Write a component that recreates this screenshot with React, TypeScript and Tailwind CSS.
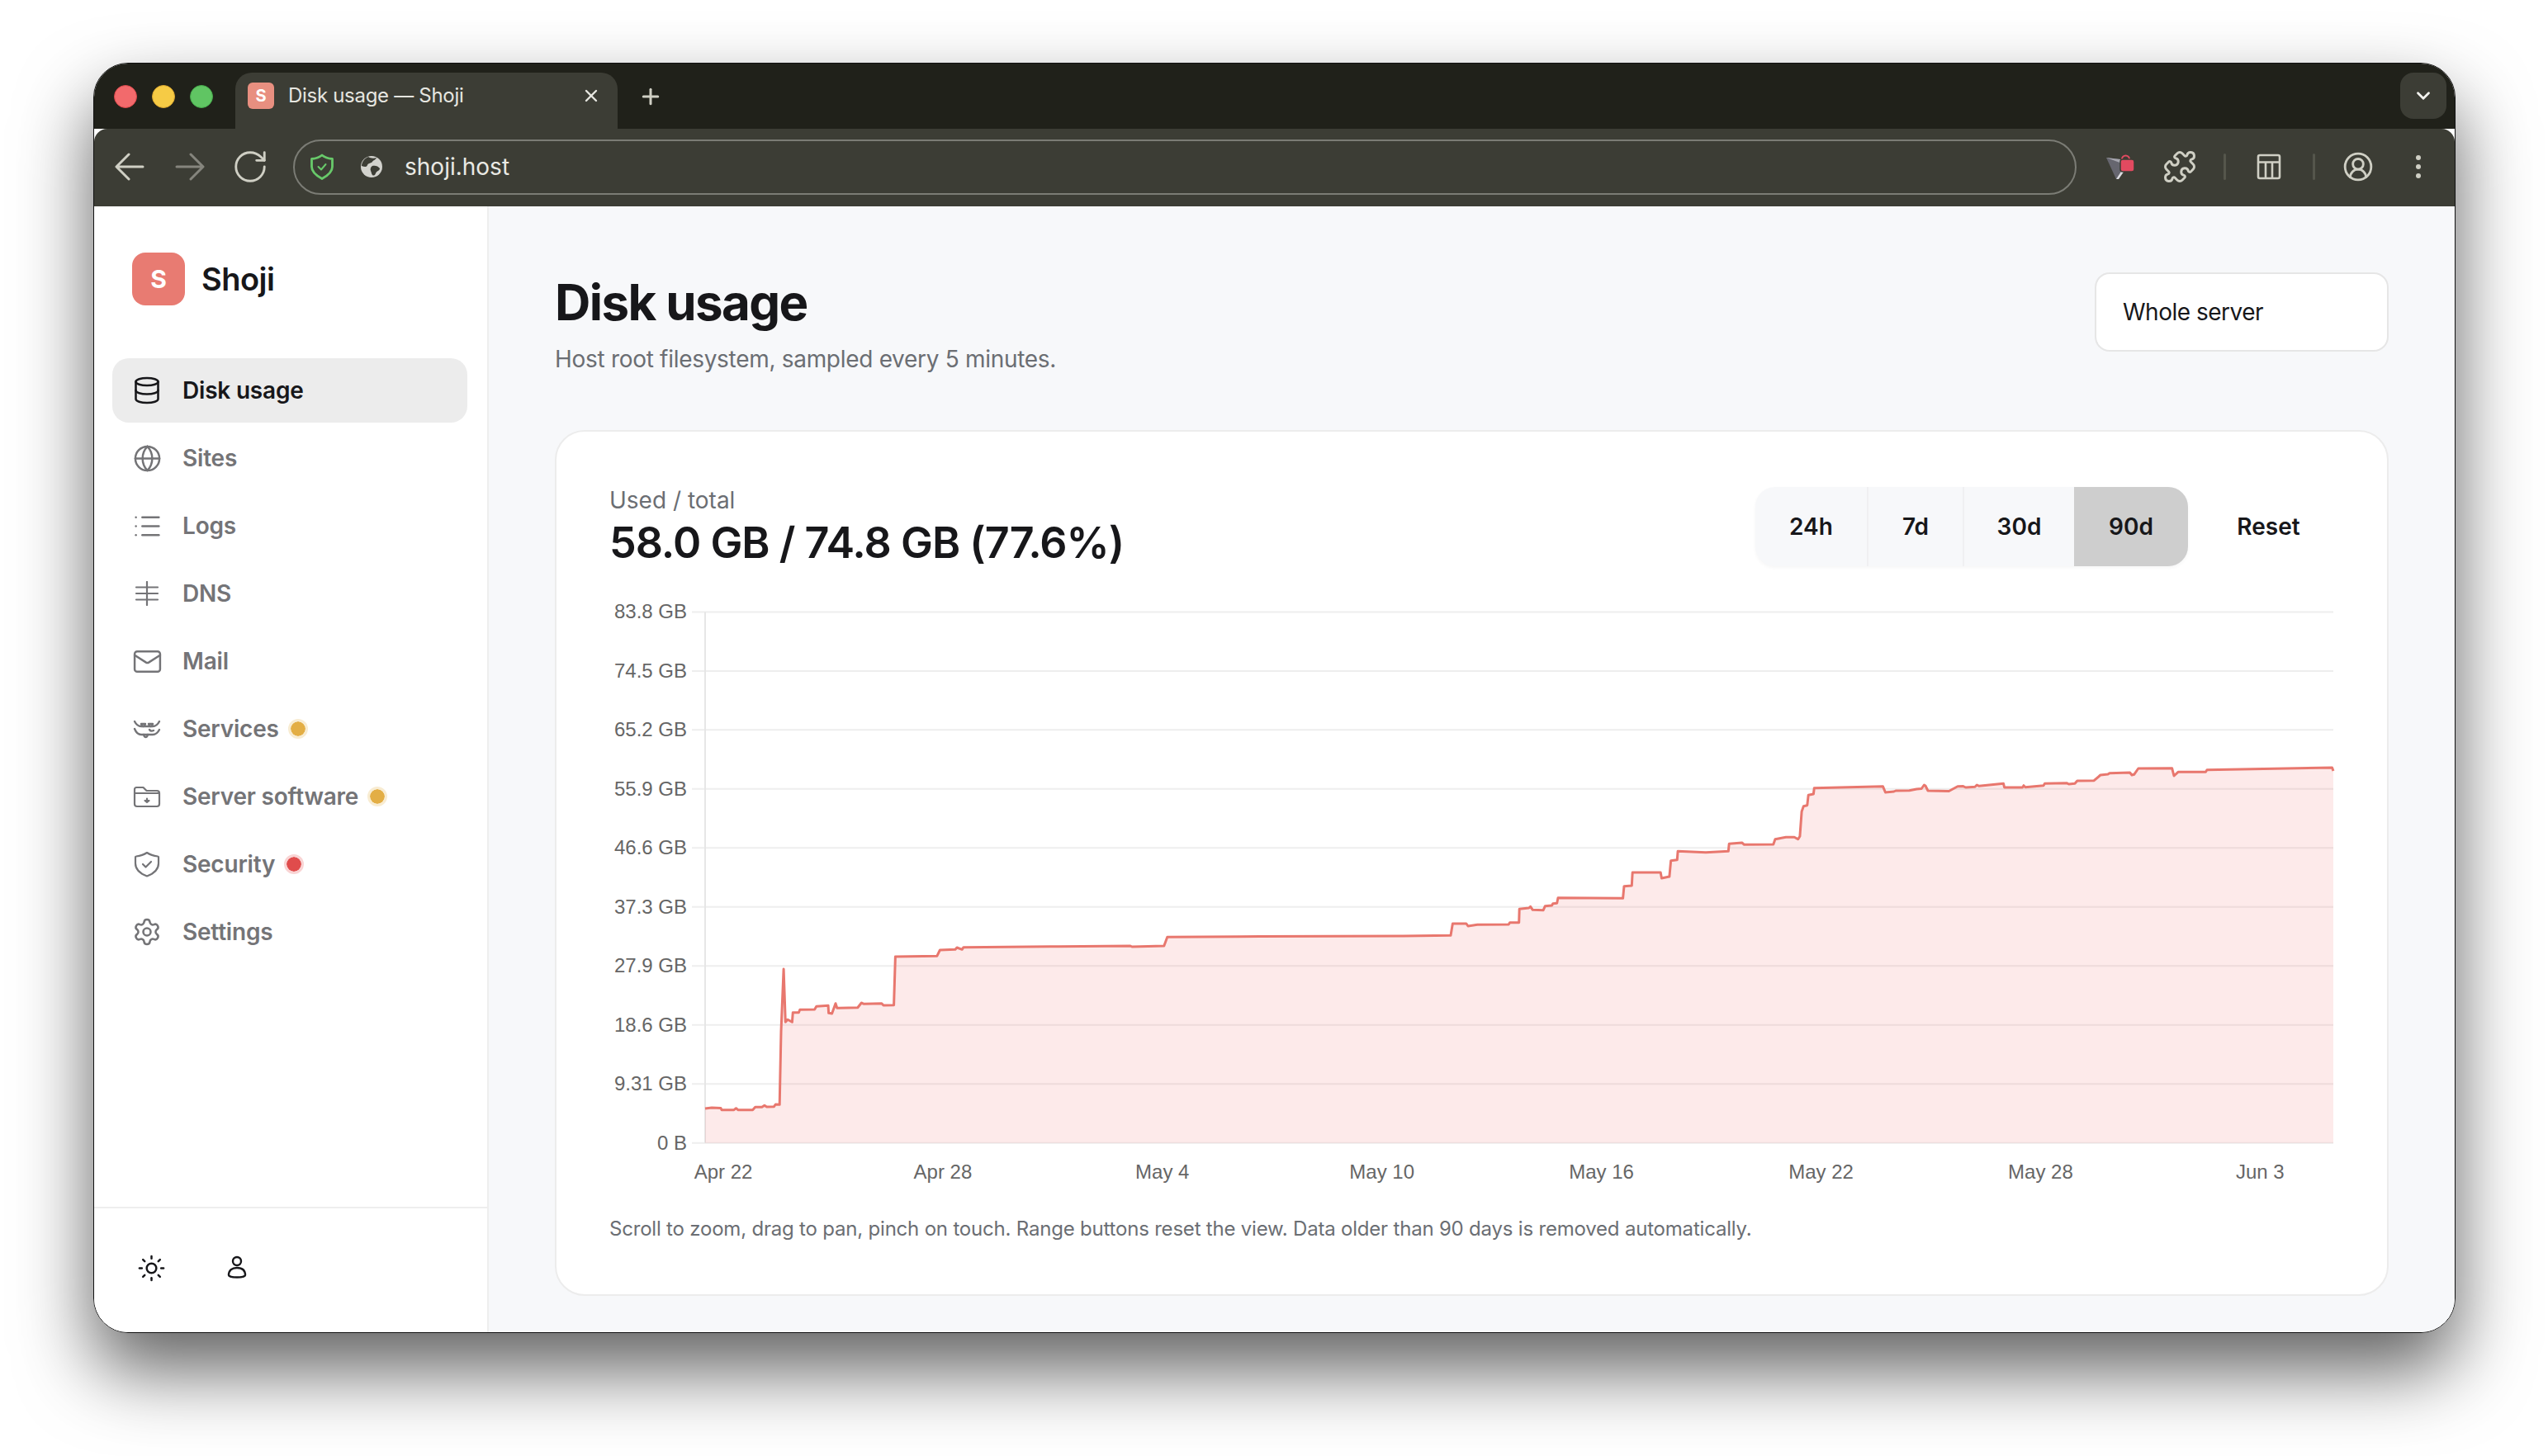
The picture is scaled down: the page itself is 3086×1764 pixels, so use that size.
import type { ReactNode } from "react";
import {
  ChevronDown,
  CircleUserRound,
  Database,
  Globe,
  List,
  Mail,
  Plus,
  Puzzle,
  RotateCw,
  Settings,
  Sun,
  X,
} from "lucide-react";

// page-pixel coordinates of the usage line, read off the screenshot
const LINE: [number, number][] = [
  [854, 1343], [862, 1342], [873, 1342.5], [874, 1344.7], [889, 1344.7], [891.5, 1342.7], [893.8, 1344.7],
  [911.6, 1344.7], [914.7, 1341.3], [922.8, 1341.3], [925.9, 1339.3], [928.6, 1341], [937.5, 1340.7], [939.3, 1338],
  [944.2, 1338.3], [946, 1250], [949.1, 1174], [951.3, 1238.3], [954, 1235.3], [959.4, 1238.3], [960.3, 1226.7],
  [967.4, 1226.7], [968.8, 1223.3], [986.6, 1223], [988.8, 1219.3], [1003.1, 1218.3], [1003.6, 1227.3], [1007.6, 1228],
  [1012, 1215.7], [1013.8, 1221.3], [1038.8, 1220.7], [1043.3, 1215], [1046.4, 1216.3], [1067.9, 1215.7], [1070, 1218],
  [1082.6, 1217.7], [1084.4, 1159], [1134.8, 1158.3], [1138.4, 1151], [1157, 1150.3], [1159, 1148], [1165.2, 1150.3],
  [1167, 1147.7], [1282, 1146.7], [1369, 1146], [1371, 1147], [1409.8, 1146], [1413.8, 1135.3], [1500, 1134.7],
  [1700, 1134], [1757, 1133.3], [1759.4, 1119], [1775.9, 1119], [1778, 1122], [1789.3, 1120.3], [1827.2, 1120],
  [1828.6, 1117.7], [1839.7, 1117.7], [1840.2, 1101.3], [1851.8, 1100], [1853.6, 1098.3], [1856.3, 1102.3],
  [1869.2, 1102.7], [1871.4, 1097.7], [1879.5, 1097], [1880.8, 1094.7], [1885.7, 1094.3], [1887, 1087.7],
  [1965.6, 1088.3], [1967, 1073.7], [1976.3, 1073], [1977.2, 1057], [2011.2, 1057], [2012.5, 1064], [2021.9, 1062],
  [2023.7, 1042.7], [2031.3, 1041.7], [2032.1, 1031.3], [2066, 1032.7], [2093.3, 1031.3], [2094.2, 1022.3],
  [2109.8, 1021], [2112.5, 1023.3], [2147.8, 1023], [2150, 1016.7], [2163, 1014.3], [2173.2, 1014.3], [2177.7, 1016.7],
  [2179.9, 1013.3], [2182.1, 983.3], [2184.4, 976.7], [2188.8, 975.7], [2190.2, 963.3], [2196.4, 962], [2197.3, 954.7],
  [2280.4, 952.7], [2283.5, 960], [2293.8, 959], [2296, 958], [2312.5, 957.7], [2321.4, 956], [2327.2, 955.5],
  [2330.4, 951], [2332, 952], [2335, 958], [2360.4, 958.5], [2371, 952.7], [2377.7, 952.6], [2380.8, 954], [2392, 953.3],
  [2394.3, 951], [2397, 952.3], [2426.5, 949.3], [2427.6, 954], [2449.5, 954], [2451, 951.7], [2453, 953.7],
  [2475, 951.7], [2476.5, 949.3], [2503, 948.7], [2505.6, 950], [2513, 949.3], [2515.8, 946], [2536.2, 945.7],
  [2543.9, 939], [2553, 938], [2555, 936.7], [2579.6, 936], [2582, 939], [2584.7, 938.3], [2589.8, 931], [2630.6, 930.7],
  [2633, 940], [2638, 935.3], [2671.4, 935.3], [2673, 932.7], [2824.5, 930], [2826, 934],
];

const TOP = 741.4;
const BOTTOM = 1384.7;
const Y_LABELS = ["83.8 GB", "74.5 GB", "65.2 GB", "55.9 GB", "46.6 GB", "37.3 GB", "27.9 GB", "18.6 GB", "9.31 GB", "0 B"];
const X_LABELS = ["Apr 22", "Apr 28", "May 4", "May 10", "May 16", "May 22", "May 28", "Jun 3"];

const linePath = LINE.map(([x, y], i) => `${i ? "L" : "M"}${x} ${y}`).join(" ");

function DnsIcon() {
  return (
    <svg width="30" height="30" viewBox="0 0 30 30" fill="none" stroke="currentColor" strokeWidth="2.2" strokeLinecap="round">
      <path d="M2 7.500h26M2 15h26M2 22.500h26M15 1v28" />
    </svg>
  );
}

function ServicesIcon() {
  return (
    <svg width="34" height="30" viewBox="0 0 34 30" fill="none" stroke="currentColor" strokeWidth="2.400" strokeLinecap="round" strokeLinejoin="round">
      <path d="M2 6c2 4 5 6 8 6h14c3 0 6-2 8-6" />
      <path d="M10 9h5c-.5 2-1.600 3-2.500 3S10.500 11 10 9zM19 9h5c-.5 2-1.600 3-2.500 3s-2-1-2.500-3z" />
      <path d="M2 15c2 5 5 7 8 7h14c3 0 6-2 8-6" />
      <path d="M13 22c.5 2 1.500 3 2.500 3s2-1 2.500-3M20 16c1 1.500 3 2 5 1" />
    </svg>
  );
}

function FolderIcon() {
  return (
    <svg width="34" height="30" viewBox="0 0 34 30" fill="none" stroke="currentColor" strokeWidth="2.200" strokeLinecap="round" strokeLinejoin="round">
      <path d="M2 10V6.500A2.500 2.500 0 0 1 4.500 4h8l4 4h12.500A3 3 0 0 1 32 11v13a3 3 0 0 1-3 3H5a3 3 0 0 1-3-3z" />
      <path d="M2 11h30" />
      <path d="M17 17.500v3M14.500 20h5l-2.500 2z" fill="currentColor" />
    </svg>
  );
}

function SecurityIcon() {
  return (
    <svg width="32" height="32" viewBox="0 0 32 32" fill="none" stroke="currentColor" strokeWidth="2.200" strokeLinecap="round" strokeLinejoin="round">
      <path d="M16 2c3.500 2.500 8 4 13 4.500 .6 0 1 .5 1 1V15c0 8-6 12.500-14 15.500C8 27.500 2 23 2 15V7.500c0-.5.4-1 1-1C8 6 12.500 4.500 16 2z" />
      <path d="M11 16l3.500 3.500 6.500-6.500" />
    </svg>
  );
}

function PersonIcon() {
  return (
    <svg width="24" height="30" viewBox="0 0 24 30" fill="none" stroke="currentColor" strokeWidth="2.400" strokeLinecap="round">
      <circle cx="12" cy="7" r="5" />
      <path d="M2 24c0-6 4-9 10-9s10 3 10 9c0 1.500-5 2.500-10 2.500S2 25.500 2 24z" />
    </svg>
  );
}

function ArrowBack() {
  return (
    <svg width="36" height="36" viewBox="0 0 36 36" fill="none" stroke="currentColor" strokeWidth="3" strokeLinecap="round" strokeLinejoin="round" className="flex-none">
      <path d="M34 18H3M17 3 2 18l15 15" />
    </svg>
  );
}

function ArrowForward() {
  return (
    <svg width="36" height="36" viewBox="0 0 36 36" fill="none" stroke="currentColor" strokeWidth="3" strokeLinecap="round" strokeLinejoin="round" className="flex-none">
      <path d="M2 18h31M19 3l15 15-15 15" />
    </svg>
  );
}

function ShieldOk() {
  return (
    <svg width="30" height="32" viewBox="0 0 30 32" fill="none" stroke="#68c96a" strokeWidth="2.800" strokeLinecap="round" strokeLinejoin="round" className="flex-none">
      <path d="M15 2c3 2.500 7 4 12.500 4.500V16c0 7-6 11-12.500 14.500C8.500 27 2.500 23 2.500 16V6.500C8 6 12 4.500 15 2z" />
      <path d="M10.500 16l3.500 3.500 5.500-6.500" strokeWidth="2" />
    </svg>
  );
}

function EarthIcon() {
  return (
    <svg width="26" height="26" viewBox="0 0 26 26" className="flex-none">
      <circle cx="13" cy="13" r="13" fill="#d2d2cd" />
      <path d="M9 1c3 2 7 2 10 1-1 3-4 3-5 5s-5 1-6 4-4 2-7 1C1 8 4 3 9 1zM14 12c3-1 7 0 9 3 0 3-4 3-5 6s-3 3-4 2-1-3-2-5 0-5 2-6z" fill="#3c3d35" />
    </svg>
  );
}

function ExtensionIcon() {
  return (
    <svg width="36" height="36" viewBox="0 0 36 36">
      <path d="M2 7l17 2 4 10-9 14z" fill="#66666f" />
      <path d="M2 7l17 2 2 5z" fill="#a5a5ad" />
      <path d="M23 19l3 1-9 13-3 0z" fill="#dcdce2" />
      <path d="M21 13v-4a4.500 4.500 0 0 1 9 0" fill="none" stroke="#e24a60" strokeWidth="2" />
      <rect x="19" y="9" width="17" height="15" rx="3" fill="#e24a60" stroke="#3c3d35" strokeWidth="1.500" />
    </svg>
  );
}

function TableIcon() {
  return (
    <svg width="30" height="32" viewBox="0 0 30 32" fill="none" stroke="#cfcfc4" strokeWidth="2.600" strokeLinejoin="round">
      <rect x="2" y="2" width="26" height="28" rx="2" />
      <path d="M2 10.500h26M11 10.500V30M19 10.500V30" />
    </svg>
  );
}

function Dot({ tone }: { tone: "amber" | "red" }) {
  return (
    <span
      className={
        tone === "amber"
          ? "ml-[11px] size-[24px] rounded-full border-[3px] border-[#f8ecd2] bg-[#e3ae45] bg-clip-padding"
          : "ml-[11px] size-[24px] rounded-full border-[3px] border-[#f9d4d4] bg-[#e04c4c] bg-clip-padding"
      }
    />
  );
}

function NavItem({ icon, label, active, dot }: { icon: ReactNode; label: string; active?: boolean; dot?: "amber" | "red" }) {
  return (
    <div
      className={
        active
          ? "flex h-[78px] items-center rounded-[20px] bg-[#ececec] pl-[24px] text-[#17171a]"
          : "flex h-[78px] items-center rounded-[20px] pl-[24px] text-[#747477]"
      }
    >
      <span className="flex w-[36px] flex-none justify-center">{icon}</span>
      <span className="ml-[25px] text-[28px] leading-[36px] font-semibold tracking-[-0.2px]">{label}</span>
      {dot && <Dot tone={dot} />}
    </div>
  );
}

function Sidebar() {
  return (
    <aside className="flex w-[478px] flex-none flex-col border-r-2 border-[#eeeeee] bg-white">
      <div className="mt-[56px] ml-[46px] flex items-center">
        <div className="flex size-[64px] items-center justify-center rounded-[16px] bg-[#e87b72] text-[30px] font-bold text-white">S</div>
        <span className="ml-[20px] text-[38px] leading-[64px] font-semibold tracking-[-0.5px] text-[#17171a]">Shoji</span>
      </div>
      <nav className="mt-[64px] flex flex-col gap-[4px] pr-[24px] pl-[22px]">
        <NavItem active label="Disk usage" icon={<Database size={36} strokeWidth={1.7} className="flex-none" />} />
        <NavItem label="Sites" icon={<Globe size={35} strokeWidth={1.7} className="flex-none" />} />
        <NavItem label="Logs" icon={<List size={37} strokeWidth={1.6} className="flex-none" />} />
        <NavItem label="DNS" icon={<DnsIcon />} />
        <NavItem label="Mail" icon={<Mail size={37} strokeWidth={1.6} className="flex-none" />} />
        <NavItem label="Services" dot="amber" icon={<ServicesIcon />} />
        <NavItem label="Server software" dot="amber" icon={<FolderIcon />} />
        <NavItem label="Security" dot="red" icon={<SecurityIcon />} />
        <NavItem label="Settings" icon={<Settings size={36} strokeWidth={1.7} className="flex-none" />} />
      </nav>
      <div className="mt-auto flex h-[152px] items-center gap-[74px] border-t-2 border-[#eeeeee] pb-[6px] pl-[52px] text-[#17171a]">
        <Sun size={35} strokeWidth={1.7} className="flex-none" />
        <PersonIcon />
      </div>
    </aside>
  );
}

function RangeButton({ label, active, first }: { label: string; active?: boolean; first?: boolean }) {
  return (
    <div
      className={
        (active ? "bg-[#cecece] " : first ? "" : "border-l-2 border-[#f0f0f2] ") +
        (label === "24h" ? "w-[135px] " : label === "7d" ? "w-[116px] " : label === "30d" ? "w-[135px] " : "w-[138px] ") +
        "flex items-center justify-center text-[28px] font-semibold text-[#17171a]"
      }
    >
      {label}
    </div>
  );
}

function Chart() {
  const step = (BOTTOM - TOP) / 9;
  return (
    <svg
      viewBox="738 720 2090 730"
      width="2090"
      height="730"
      className="mt-[34px] block font-['Liberation_Sans',sans-serif]"
    >
      {Y_LABELS.map((l, i) => (
        <g key={l}>
          <line x1="838" x2="2826" y1={TOP + i * step} y2={TOP + i * step} stroke="#eeeeee" strokeWidth="2" />
          <text x="832" y={TOP + i * step + 8} textAnchor="end" fontSize="24" fill="#666666">
            {l}
          </text>
        </g>
      ))}
      <line x1="854" x2="854" y1={TOP} y2={BOTTOM} stroke="#e6e6e6" strokeWidth="2" />
      <path d={`${linePath} L2826 ${BOTTOM} L854 ${BOTTOM} Z`} fill="#f06a6a" fillOpacity="0.14" />
      <path d={linePath} fill="none" stroke="#e8776e" strokeWidth="3" strokeLinejoin="round" />
      {X_LABELS.map((l, i) => (
        <text key={l} x={876 + i * 265.9} y="1428" textAnchor="middle" fontSize="24" fill="#666666">
          {l}
        </text>
      ))}
    </svg>
  );
}

function Main() {
  return (
    <main className="min-w-0 flex-1 bg-[#f7f8fa] pt-[80px] pr-[80px] pl-[80px]">
      <div className="flex items-start justify-between">
        <div>
          <h1 className="text-[60px] leading-[72px] font-bold tracking-[-1.6px] text-[#17171a]">Disk usage</h1>
          <p className="mt-[15px] text-[28px] leading-[36px] tracking-[-0.3px] text-[#6b6e73]">Host root filesystem, sampled every 5 minutes.</p>
        </div>
        <div className="flex h-[96px] w-[356px] items-center rounded-[18px] border-2 border-[#e6e6e6] bg-white pl-[32px] text-[28px] tracking-[-0.5px] text-[#17171a]">
          Whole server
        </div>
      </div>
      <section className="mt-[68px] h-[1049px] rounded-[36px] border-2 border-[#ececec] bg-white pt-[67px] pr-[63px] pl-[64px]">
        <div className="flex h-[96px] items-start justify-between">
          <div className="-mt-[1px]">
            <div className="text-[28px] leading-[34px] text-[#6b6e73]">Used / total</div>
            <div className="mt-[5px] text-[52px] leading-[60px] font-semibold tracking-[-1px] text-[#17171a]">58.0 GB / 74.8 GB (77.6%)</div>
          </div>
          <div className="flex items-center gap-[20px]">
            <div className="flex h-[96px] overflow-hidden rounded-[24px] bg-[#f7f8fa] shadow-[0_2px_4px_rgba(0,0,0,0.04)]">
              <RangeButton label="24h" first />
              <RangeButton label="7d" />
              <RangeButton label="30d" />
              <RangeButton label="90d" active />
            </div>
            <div className="flex h-[96px] w-[158px] items-center justify-center pr-[3px] text-[28px] font-semibold text-[#17171a]">Reset</div>
          </div>
        </div>
        <Chart />
        <p className="mt-[22px] -translate-y-[1px] text-[24px] leading-[36px] tracking-[-0.2px] text-[#6b6e73]">
          Scroll to zoom, drag to pan, pinch on touch. Range buttons reset the view. Data older than 90 days is removed automatically.
        </p>
      </section>
    </main>
  );
}

function BrowserChrome() {
  return (
    <>
      <div className="flex h-[79px] flex-none items-start bg-[#20211a] pt-[11px] pl-[24px]">
        <div className="mt-[15px] flex gap-[18px]">
          <span className="size-[28px] rounded-full border border-[#d9474a] bg-[#f26a6c]" />
          <span className="size-[28px] rounded-full border border-[#d9a52f] bg-[#f6cb45]" />
          <span className="size-[28px] rounded-full border border-[#45a84a] bg-[#60c563]" />
        </div>
        <div className="ml-[27px] flex h-[68px] w-[463px] items-start rounded-t-[20px] bg-[#3c3d35] pt-[12px] pl-[15px] text-[#e6e6e0]">
          <span className="flex size-[32px] items-center justify-center rounded-[6px] bg-[#e88f80] text-[20px] font-bold text-white">S</span>
          <span className="ml-[17px] text-[24px] leading-[32px] tracking-[-0.3px]">Disk usage — Shoji</span>
          <X size={24} strokeWidth={2.4} className="mt-[4px] mr-[20px] ml-auto" />
        </div>
        <Plus size={30} strokeWidth={2.4} className="mt-[14px] ml-[25px] text-[#cfcfc4]" />
        <div className="mr-[10px] ml-auto flex h-[56px] w-[56px] items-center justify-center rounded-[16px] bg-[#3c3d35] text-[#f2f2ee]">
          <ChevronDown size={26} strokeWidth={2.6} />
        </div>
      </div>
      <div className="flex h-[94px] flex-none items-center rounded-t-[16px] bg-[#3c3d35] pb-[2px] pl-[25px] text-[#cfcfc4]">
        <ArrowBack />
        <span className="ml-[37px] flex-none text-[#85857d]"><ArrowForward /></span>
        <span className="ml-[37px] flex w-[36px] flex-none justify-center"><RotateCw size={46} strokeWidth={1.5} className="flex-none" /></span>
        <div className="ml-[34px] flex h-[67px] min-w-0 flex-1 items-center rounded-full border-2 border-[#7b7c75] pl-[18px]">
          <ShieldOk />
          <span className="ml-[32px]"><EarthIcon /></span>
          <span className="ml-[27px] text-[28px] text-[#e9e9e4]">shoji.host</span>
        </div>
        <span className="ml-[34px] flex-none"><ExtensionIcon /></span>
        <span className="ml-[37px] flex w-[36px] flex-none justify-center"><Puzzle size={42} strokeWidth={1.7} className="flex-none" /></span>
        <span className="ml-[35px] h-[32px] w-[3px] flex-none rounded-full bg-[#55564c]" />
        <span className="ml-[34px] flex w-[36px] flex-none justify-center"><TableIcon /></span>
        <span className="ml-[35px] h-[32px] w-[3px] flex-none rounded-full bg-[#55564c]" />
        <span className="ml-[34px] flex w-[36px] flex-none justify-center"><CircleUserRound size={38} strokeWidth={1.8} className="flex-none" /></span>
        <div className="mr-[26px] ml-[37px] flex w-[36px] flex-none flex-col items-center gap-[5px]">
          <span className="size-[6px] rounded-full bg-[#cfcfc4]" />
          <span className="size-[6px] rounded-full bg-[#cfcfc4]" />
          <span className="size-[6px] rounded-full bg-[#cfcfc4]" />
        </div>
      </div>
    </>
  );
}

export default function App() {
  return (
    <div className="h-[1764px] w-[3086px] overflow-hidden bg-white pt-[76px] pl-[113px] font-[Inter,sans-serif]">
      <div className="flex h-[1539px] w-[2861px] flex-col overflow-hidden rounded-[42px] border border-[#111111] shadow-[0_45px_90px_rgba(0,0,0,0.62)]">
        <BrowserChrome />
        <div className="flex min-h-0 flex-1">
          <Sidebar />
          <Main />
        </div>
      </div>
    </div>
  );
}
